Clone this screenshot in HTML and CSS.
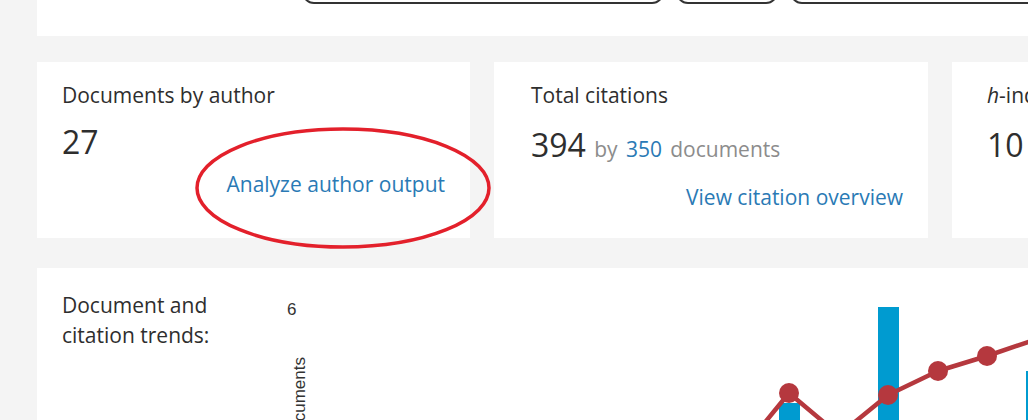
FILE: index.html
```html
<!DOCTYPE html>
<html lang="en">
<head>
  <meta charset="UTF-8">
  <title>Author details</title>
  <link rel="stylesheet" href="styles.css">
</head>
<body>
  <div class="page">
    <div class="top-panel">
      <button class="pill pill-wide"></button>
      <button class="pill pill-small"></button>
      <button class="pill pill-wide"></button>
    </div>

    <div class="metrics">
      <div class="card card-first">
        <div class="card-title">Documents by author</div>
        <div class="card-value">27</div>
        <div class="card-link"><a href="#">Analyze author output</a></div>
        <svg class="annotation" width="300" height="128" viewBox="0 0 300 128">
          <ellipse cx="150" cy="64" rx="146" ry="59" fill="none" stroke="#e3202b" stroke-width="3.5"/>
        </svg>
      </div>
      <div class="card">
        <div class="card-title">Total citations</div>
        <div class="card-value">394 <span class="muted">by</span> <a href="#" class="small-link">350</a> <span class="muted">documents</span></div>
        <div class="card-link"><a href="#">View citation overview</a></div>
      </div>
      <div class="card card-last">
        <div class="card-title"><i>h</i>-index</div>
        <div class="card-value">10</div>
      </div>
    </div>

    <div class="trends">
      <div class="trends-label">Document and<br>citation trends:</div>
      <svg class="chart" width="800" height="152" viewBox="0 0 800 152">
        <text x="25" y="47" class="axis-num">6</text>
        <text x="43" y="89" class="axis-title" text-anchor="end" transform="rotate(-90 43 89)">Documents</text>
        <rect x="517" y="135" width="21" height="60" fill="#009bd0"/>
        <rect x="616" y="39" width="21" height="160" fill="#009bd0"/>
        <rect x="764" y="103" width="21" height="100" fill="#009bd0"/>
        <polyline points="478,185 527,125 577,167 626,127 676,103 725,88 775,71" fill="none" stroke="#b5383e" stroke-width="4.5" stroke-linejoin="round"/>
        <g fill="#b5383e">
          <circle cx="527" cy="125" r="10"/>
          <circle cx="626" cy="127" r="10"/>
          <circle cx="676" cy="103" r="10"/>
          <circle cx="725" cy="88" r="10"/>
        </g>
      </svg>
    </div>
  </div>
</body>
</html>
```

FILE: styles.css
```css
body {
  margin: 0;
  background: #f4f4f4;
  font-family: 'Open Sans', sans-serif;
  color: #2e2e2e;
  overflow: hidden;
}

.page {
  padding-left: 37px;
  width: 1400px;
}

.top-panel {
  display: flex;
  align-items: flex-start;
  gap: 12px;
  background: #ffffff;
  height: 36px;
  padding-left: 265px;
}

.pill {
  height: 36px;
  margin-top: -32px;
  background: #ffffff;
  border: 2px solid #333;
  border-radius: 12px;
}

.pill-wide {
  width: 362px;
}

.pill-small {
  width: 102px;
}

.metrics {
  display: flex;
  gap: 24px;
  margin-top: 26px;
}

.card {
  position: relative;
  background: #ffffff;
  width: 434px;
  height: 176px;
  padding: 19px 25px 0 37px;
  box-sizing: border-box;
}

.card-first {
  width: 433px;
  padding-left: 25px;
}

.card-last {
  padding-left: 35px;
}

.card-title {
  font-size: 21px;
  line-height: 28px;
}

.card-value {
  font-size: 32px;
  line-height: 40px;
  margin-top: 16px;
}

.card-first .card-value {
  margin-top: 13px;
}

.muted {
  font-size: 21px;
  color: #8c8c8c;
}

.small-link {
  font-size: 21px;
  color: #2a7ab5;
  text-decoration: none;
}

.card-link {
  text-align: right;
  font-size: 21px;
  line-height: 28px;
  margin-top: 14px;
}

.card-first .card-link {
  margin-top: 8px;
}

.card-link a {
  color: #2a7ab5;
  text-decoration: none;
}

.annotation {
  position: absolute;
  left: 156px;
  top: 62px;
}

.trends {
  display: flex;
  background: #ffffff;
  margin-top: 30px;
  height: 160px;
  padding-left: 25px;
}

.trends-label {
  width: 200px;
  padding-top: 22px;
  font-size: 21px;
  line-height: 30px;
}

.chart {
  display: block;
}

.axis-num, .axis-title {
  font-family: 'Liberation Sans', Arial, sans-serif;
  font-size: 17px;
  fill: #333;
}
```
